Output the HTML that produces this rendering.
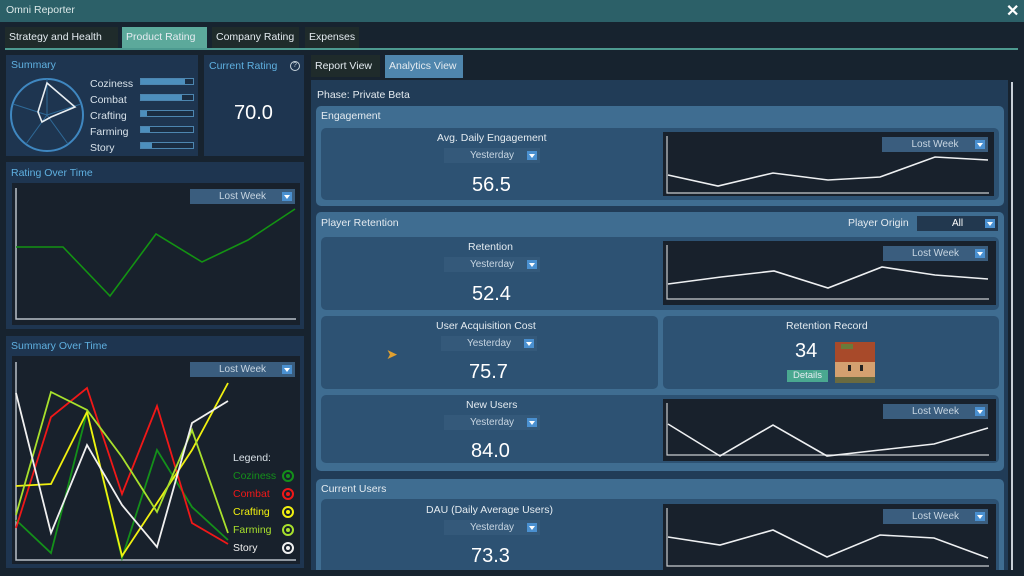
<!DOCTYPE html>
<html><head><meta charset="utf-8"><style>
*{margin:0;padding:0;box-sizing:border-box}
body{width:1024px;height:576px;background:#17232f;font-family:"Liberation Sans",sans-serif;color:#e4ebf0;position:relative;overflow:hidden;font-size:10px}
.a{position:absolute}
.t{position:absolute;white-space:nowrap}
.panel{position:absolute;background:#1e3550}
.chart{position:absolute;background:#18212c}
.dd{position:absolute;background:#3a5d7e;color:#c8d6e2;font-size:10px;height:15px;line-height:15px;text-align:center}
.dd i{position:absolute;right:3px;top:3px;width:10px;height:9px;background:#4a90d0}
.dd i:after{content:"";position:absolute;left:2px;top:3px;border-left:3px solid transparent;border-right:3px solid transparent;border-top:4px solid #fff}
.sec{position:absolute;background:#3f6d91;border-radius:5px}
.in{position:absolute;background:#2d5273;border-radius:5px}
.h{color:#5fb0e0;font-size:10.5px}
.big{font-size:20px;color:#fff}
</style></head><body>
<div class="a" style="left:0;top:0;width:1024px;height:22px;background:#2c6068"></div>
<div class="t" style="left:6px;top:4px;font-size:10.5px;color:#dbe8e8">Omni Reporter</div>
<div class="t" style="left:1006px;top:1px;font-size:16px;font-weight:bold;color:#fff">✕</div>

<div class="a" style="left:5px;top:27px;width:113px;height:21px;background:#1f2b2b"></div>
<div class="t" style="left:9px;top:31px;font-size:10.5px">Strategy and Health</div>
<div class="a" style="left:122px;top:27px;width:85px;height:22px;background:#5ca99b"></div>
<div class="t" style="left:126px;top:31px;font-size:10.5px">Product Rating</div>
<div class="a" style="left:212px;top:27px;width:87px;height:21px;background:#1f2b2b"></div>
<div class="t" style="left:216px;top:31px;font-size:10.5px">Company Rating</div>
<div class="a" style="left:305px;top:27px;width:54px;height:21px;background:#1f2b2b"></div>
<div class="t" style="left:309px;top:31px;font-size:10.5px">Expenses</div>
<div class="a" style="left:5px;top:48px;width:1013px;height:2px;background:#4d9a90"></div>

<!-- Summary -->
<div class="panel" style="left:6px;top:55px;width:192px;height:101px"></div>
<div class="t h" style="left:11px;top:59px">Summary</div>
<svg class="a" style="left:0;top:70px" width="100" height="90">
<circle cx="47" cy="45" r="36" fill="none" stroke="#3f87c0" stroke-width="2"/>
<g stroke="#2f6a98" stroke-width="1"><line x1="47" y1="45" x2="47" y2="9"/><line x1="47" y1="45" x2="81" y2="34"/><line x1="47" y1="45" x2="68" y2="74"/><line x1="47" y1="45" x2="26" y2="74"/><line x1="47" y1="45" x2="13" y2="34"/></g>
<polygon points="47,13 75,37 51,47 42,52 38,42" fill="none" stroke="#e8eef2" stroke-width="1.6"/>
</svg>
<div class="t" style="left:90px;top:76px;font-size:10.5px;line-height:16px;color:#d8e2ea">Coziness<br>Combat<br>Crafting<br>Farming<br>Story</div>
<div class="a" style="left:140px;top:78px;width:54px;height:7px;border:1px solid #4d86b0;background:#1a2d42"><div style="width:85%;height:100%;background:#4d8fbd"></div></div>
<div class="a" style="left:140px;top:94px;width:54px;height:7px;border:1px solid #4d86b0;background:#1a2d42"><div style="width:78%;height:100%;background:#4d8fbd"></div></div>
<div class="a" style="left:140px;top:110px;width:54px;height:7px;border:1px solid #4d86b0;background:#1a2d42"><div style="width:12%;height:100%;background:#4d8fbd"></div></div>
<div class="a" style="left:140px;top:126px;width:54px;height:7px;border:1px solid #4d86b0;background:#1a2d42"><div style="width:17%;height:100%;background:#4d8fbd"></div></div>
<div class="a" style="left:140px;top:142px;width:54px;height:7px;border:1px solid #4d86b0;background:#1a2d42"><div style="width:22%;height:100%;background:#4d8fbd"></div></div>

<div class="panel" style="left:204px;top:55px;width:100px;height:101px"></div>
<div class="t h" style="left:209px;top:60px">Current Rating</div>
<div class="a" style="left:290px;top:61px;width:10px;height:10px;border:1.5px solid #c8d4dc;border-radius:50%;font-size:7px;line-height:7px;text-align:center;color:#c8d4dc">?</div>
<div class="t big" style="left:234px;top:102px">70.0</div>

<!-- Rating over time -->
<div class="panel" style="left:6px;top:162px;width:298px;height:167px"></div>
<div class="t h" style="left:11px;top:167px">Rating Over Time</div>
<div class="chart" style="left:12px;top:183px;width:288px;height:142px"></div>
<svg class="a" style="left:0;top:0" width="310" height="340">
<polyline points="16,188 16,319 296,319" fill="none" stroke="#b8c0c8" stroke-width="1.5"/>
<polyline points="16,247 63,247 110,296 156,234 202,262 248,240 295,209" fill="none" stroke="#139313" stroke-width="1.6"/>
</svg>
<div class="dd" style="left:190px;top:189px;width:105px">Lost Week<i></i></div>

<!-- Summary over time -->
<div class="panel" style="left:6px;top:336px;width:298px;height:232px"></div>
<div class="t h" style="left:11px;top:340px">Summary Over Time</div>
<div class="chart" style="left:12px;top:356px;width:288px;height:208px"></div>
<svg class="a" style="left:0;top:0" width="310" height="576">
<polyline points="16,362 16,560 296,560" fill="none" stroke="#b8c0c8" stroke-width="1.5"/>
<g fill="none" stroke-width="1.8">
<polyline stroke="#14901a" points="16,520 51,553 87,412 122,558 157,450 192,507 228,540"/>
<polyline stroke="#f01818" points="16,528 51,417 87,388 122,494 157,406 192,523 228,544"/>
<polyline stroke="#f0f010" points="16,486 51,484 87,412 122,556 157,503 192,450 228,383"/>
<polyline stroke="#a8e02c" points="16,515 51,392 87,410 122,457 157,512 192,430 228,533"/>
<polyline stroke="#f0f0f0" points="16,393 51,533 87,445 122,505 157,547 192,423 228,401"/>
</g>
<g fill="none" stroke-width="2"><circle cx="288" cy="476" r="5" stroke="#14901a"/><circle cx="288" cy="494" r="5" stroke="#f01818"/><circle cx="288" cy="512" r="5" stroke="#f0f010"/><circle cx="288" cy="530" r="5" stroke="#a8e02c"/><circle cx="288" cy="548" r="5" stroke="#f0f0f0"/></g>
<g><circle cx="288" cy="476" r="2" fill="#14901a"/><circle cx="288" cy="494" r="2" fill="#f01818"/><circle cx="288" cy="512" r="2" fill="#f0f010"/><circle cx="288" cy="530" r="2" fill="#a8e02c"/><circle cx="288" cy="548" r="2" fill="#f0f0f0"/></g>
</svg>
<div class="dd" style="left:190px;top:362px;width:105px">Lost Week<i></i></div>
<div class="t" style="left:233px;top:452px;font-size:10.5px;color:#d8e0e6">Legend:</div>
<div class="t" style="left:233px;top:470px;font-size:10.5px;color:#14901a">Coziness</div>
<div class="t" style="left:233px;top:488px;font-size:10.5px;color:#f01818">Combat</div>
<div class="t" style="left:233px;top:506px;font-size:10.5px;color:#f0f010">Crafting</div>
<div class="t" style="left:233px;top:524px;font-size:10.5px;color:#a8e02c">Farming</div>
<div class="t" style="left:233px;top:542px;font-size:10.5px;color:#f0f0f0">Story</div>

<!-- Right side -->
<div class="a" style="left:311px;top:55px;width:69px;height:22px;background:#1f2b2b"></div>
<div class="t" style="left:315px;top:60px;font-size:10.5px">Report View</div>
<div class="a" style="left:385px;top:55px;width:78px;height:23px;background:#4f86ad"></div>
<div class="t" style="left:389px;top:60px;font-size:10.5px">Analytics View</div>
<div class="a" style="left:311px;top:80px;width:697px;height:490px;background:#213c57"></div>
<div class="a" style="left:1011px;top:82px;width:2px;height:488px;background:#c8d0d8"></div>
<div class="t" style="left:317px;top:89px;font-size:10.5px">Phase: Private Beta</div>

<div class="sec" style="left:316px;top:106px;width:688px;height:100px"></div>
<div class="t" style="left:321px;top:110px;font-size:10.5px">Engagement</div>
<div class="in" style="left:321px;top:128px;width:678px;height:72px"></div>
<div class="t" style="left:437px;top:132px;font-size:10.5px">Avg. Daily Engagement</div>
<div class="dd" style="left:444px;top:148px;width:96px;background:#34597a">Yesterday<i></i></div>
<div class="t big" style="left:472px;top:174px">56.5</div>
<div class="chart" style="left:663px;top:132px;width:331px;height:64px"></div>

<div class="sec" style="left:316px;top:212px;width:688px;height:259px"></div>
<div class="t" style="left:321px;top:217px;font-size:10.5px">Player Retention</div>
<div class="t" style="left:848px;top:217px;font-size:10.5px">Player Origin</div>
<div class="dd" style="left:917px;top:216px;width:81px;background:#22384f;color:#fff">All<i></i></div>
<div class="in" style="left:321px;top:237px;width:678px;height:73px"></div>
<div class="t" style="left:468px;top:241px;font-size:10.5px">Retention</div>
<div class="dd" style="left:444px;top:257px;width:96px;background:#34597a">Yesterday<i></i></div>
<div class="t big" style="left:472px;top:283px">52.4</div>
<div class="chart" style="left:663px;top:241px;width:333px;height:64px"></div>

<div class="in" style="left:321px;top:316px;width:337px;height:73px"></div>
<div class="t" style="left:436px;top:320px;font-size:10.5px">User Acquisition Cost</div>
<div class="dd" style="left:441px;top:336px;width:96px;background:#34597a">Yesterday<i></i></div>
<div class="t big" style="left:469px;top:361px">75.7</div>
<div class="t" style="left:386px;top:346px;color:#e0a030;font-size:14px">➤</div>
<div class="in" style="left:663px;top:316px;width:336px;height:73px"></div>
<div class="t" style="left:786px;top:320px;font-size:10.5px">Retention Record</div>
<div class="t big" style="left:795px;top:340px">34</div>
<div class="a" style="left:787px;top:370px;width:41px;height:12px;background:#4aa890;font-size:9.5px;text-align:center;line-height:12px">Details</div>
<div class="a" style="left:835px;top:342px;width:40px;height:41px;background:#d4a070;overflow:hidden">
<div class="a" style="left:0;top:0;width:40px;height:20px;background:#a84a2a"></div>
<div class="a" style="left:6px;top:2px;width:12px;height:5px;background:#6a7a3a"></div>
<div class="a" style="left:13px;top:23px;width:3px;height:6px;background:#222"></div>
<div class="a" style="left:25px;top:23px;width:3px;height:6px;background:#222"></div>
<div class="a" style="left:0;top:35px;width:40px;height:6px;background:#6a6a40"></div>
</div>

<div class="in" style="left:321px;top:395px;width:678px;height:68px"></div>
<div class="t" style="left:466px;top:399px;font-size:10.5px">New Users</div>
<div class="dd" style="left:444px;top:415px;width:96px;background:#34597a">Yesterday<i></i></div>
<div class="t big" style="left:471px;top:440px">84.0</div>
<div class="chart" style="left:663px;top:399px;width:333px;height:62px"></div>

<div class="sec" style="left:316px;top:479px;width:688px;height:97px"></div>
<div class="t" style="left:321px;top:483px;font-size:10.5px">Current Users</div>
<div class="in" style="left:321px;top:499px;width:678px;height:77px"></div>
<div class="t" style="left:426px;top:504px;font-size:10.5px">DAU (Daily Average Users)</div>
<div class="dd" style="left:444px;top:520px;width:96px;background:#34597a">Yesterday<i></i></div>
<div class="t big" style="left:471px;top:545px">73.3</div>
<div class="chart" style="left:663px;top:504px;width:333px;height:66px"></div>
<div class="a" style="left:0;top:570px;width:1024px;height:6px;background:#17232f"></div>

<svg class="a" style="left:0;top:0" width="1024" height="576">
<g fill="none" stroke="#c8ccd0" stroke-width="1.2">
<polyline points="667,136 667,193 989,193"/>
<polyline points="667,245 667,299 989,299"/>
<polyline points="667,403 667,455 989,455"/>
<polyline points="667,508 667,566 989,566"/>
</g>
<g fill="none" stroke="#eef0f2" stroke-width="1.6">
<polyline points="668,175 718,186 773,173 828,180 880,177 935,157 988,160"/>
<polyline points="668,284 721,277 774,271 828,288 882,267 935,275 988,279"/>
<polyline points="668,424 720,456 773,425 827,456 880,450 934,444 988,428"/>
<polyline points="668,537 720,545 773,530 827,557 880,535 934,538 988,558"/>
</g>
</svg>
<div class="dd" style="left:882px;top:137px;width:106px">Lost Week<i></i></div>
<div class="dd" style="left:883px;top:246px;width:105px">Lost Week<i></i></div>
<div class="dd" style="left:883px;top:404px;width:105px">Lost Week<i></i></div>
<div class="dd" style="left:883px;top:509px;width:105px">Lost Week<i></i></div>
</body></html>
